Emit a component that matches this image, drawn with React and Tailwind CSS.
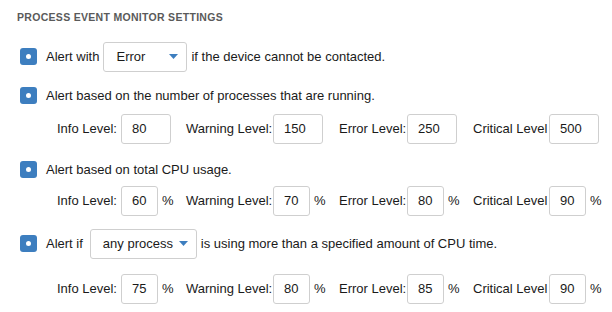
import React from 'react';

function Check() {
  return (
    <span className="flex h-[17px] w-[17px] shrink-0 items-center justify-center rounded-[3px] bg-[#3d7ebf]">
      <span className="h-[5px] w-[5px] rounded-full bg-white" />
    </span>
  );
}

function Select({ value, width }) {
  return (
    <div className={`flex h-[30px] ${width} items-center justify-between rounded-[3px] border border-[#cfcfcf] bg-white pl-[12px] pr-[8px]`}>
      <span>{value}</span>
      <svg width="9" height="5" viewBox="0 0 9 5">
        <path d="M0 0h9L4.5 5z" fill="#3d7ebf" />
      </svg>
    </div>
  );
}

function Field({ label, value, group, labelW, inputW, pct }) {
  return (
    <div className={`flex items-center ${group}`}>
      <span className={`${labelW}`}>{label}</span>
      <div className={`flex h-[30px] ${inputW} items-center rounded-[3px] border border-[#cfcfcf] bg-white pl-[10px]`}>
        {value}
      </div>
      {pct && <span className="ml-[4px]">%</span>}
    </div>
  );
}

function Levels({ values, pct }) {
  const inputW = pct ? 'w-[37px]' : 'w-[50px]';
  return (
    <div className="flex items-center pl-[57px]">
      <Field label="Info Level:" value={values[0]} group="w-[129px]" labelW="w-[64px]" inputW={inputW} pct={pct} />
      <Field label="Warning Level:" value={values[1]} group="w-[153px]" labelW="w-[87px]" inputW={inputW} pct={pct} />
      <Field label="Error Level:" value={values[2]} group="w-[134px]" labelW="w-[68px]" inputW={inputW} pct={pct} />
      <Field label="Critical Level" value={values[3]} group="" labelW="w-[76px]" inputW={inputW} pct={pct} />
    </div>
  );
}

export default function App() {
  return (
    <div className="h-[312px] w-[612px] bg-white text-[13px] text-[#1a1a1a]" style={{ fontFamily: '"Liberation Sans", Arial, sans-serif' }}>
      <div className="pl-[17px] pt-[10px] text-[10.5px] font-bold tracking-[0.3px] text-[#5a5a5a]">
        PROCESS EVENT MONITOR SETTINGS
      </div>

      <div className="mt-[16px] flex items-center pl-[20px]">
        <Check />
        <span className="ml-[9px] mr-[4px]">Alert with</span>
        <Select value="Error" width="w-[84px]" />
        <span className="ml-[4px]">if the device cannot be contacted.</span>
      </div>

      <div className="mt-[14px] flex h-[20px] items-center pl-[20px]">
        <Check />
        <span className="ml-[9px]">Alert based on the number of processes that are running.</span>
      </div>
      <div className="mt-[8px]">
        <Levels values={['80', '150', '250', '500']} />
      </div>

      <div className="mt-[16px] flex h-[20px] items-center pl-[20px]">
        <Check />
        <span className="ml-[9px]">Alert based on total CPU usage.</span>
      </div>
      <div className="mt-[6px]">
        <Levels values={['60', '70', '80', '90']} pct />
      </div>

      <div className="mt-[13px] flex items-center pl-[20px]">
        <Check />
        <span className="ml-[9px] mr-[7px]">Alert if</span>
        <Select value="any process" width="w-[107px]" />
        <span className="ml-[4px]">is using more than a specified amount of CPU time.</span>
      </div>
      <div className="mt-[15px]">
        <Levels values={['75', '80', '85', '90']} pct />
      </div>
    </div>
  );
}
